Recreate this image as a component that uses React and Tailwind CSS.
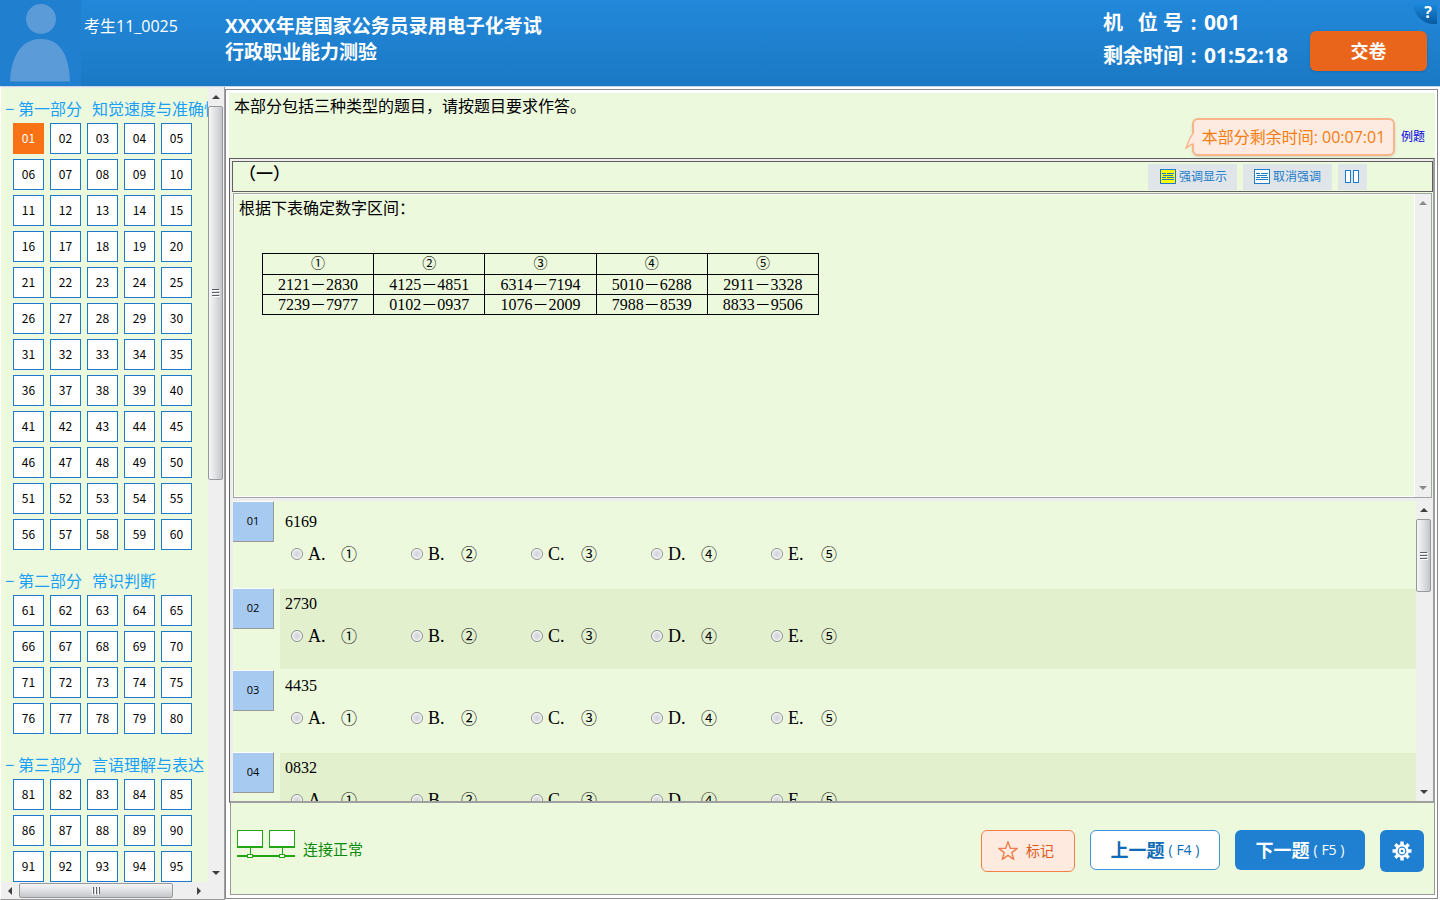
import React, { useState } from "react";

const SECTIONS = [
  { part: "第一部分", name: "知觉速度与准确性", from: 1, to: 60 },
  { part: "第二部分", name: "常识判断", from: 61, to: 80 },
  { part: "第三部分", name: "言语理解与表达", from: 81, to: 95 },
];

const MARKS = ["①", "②", "③", "④", "⑤"];
const LETTERS = ["A", "B", "C", "D", "E"];

const RANGES = [
  ["2121－2830", "4125－4851", "6314－7194", "5010－6288", "2911－3328"],
  ["7239－7977", "0102－0937", "1076－2009", "7988－8539", "8833－9506"],
];

const QUESTIONS = ["6169", "2730", "4435", "0832"];

const pad = (n) => String(n).padStart(2, "0");

function Arrow({ dir, faded }) {
  const d = {
    up: "M1 7 5 3l4 4z",
    down: "M1 3h8L5 7z",
    left: "M7 1v8L3 5z",
    right: "M3 1v8l4-4z",
  }[dir];
  return (
    <svg viewBox="0 0 10 10" className={faded ? "size-2.5 fill-[#8a8a8a]" : "size-2.5 fill-[#404040]"}>
      <path d={d} />
    </svg>
  );
}

function Grip({ vertical }) {
  return (
    <svg viewBox="0 0 8 8" className={vertical ? "size-2" : "size-2 rotate-90"} shapeRendering="crispEdges">
      <path d="M0 .5h7M0 3.5h7M0 6.5h7" stroke="#5c6066" strokeWidth="1" />
      <path d="M1 1.5h7M1 4.5h7M1 7.5h7" stroke="#ffffff" strokeWidth="1" />
    </svg>
  );
}

function VScroll({ thumb, faded }) {
  return (
    <div aria-hidden="true" className="flex w-4 shrink-0 flex-col bg-[#efefef]">
      <div className="flex h-[18px] w-[15px] shrink-0 items-center justify-center">
        <Arrow dir="up" faded={faded} />
      </div>
      {thumb && (
        <div
          className={`${thumb} flex w-[15px] shrink-0 items-center justify-center rounded-[2px] border border-[#96999e] bg-linear-to-r from-[#f6f6f7] via-[#dfe1e4] to-[#c2c5ca]`}
        >
          <Grip vertical />
        </div>
      )}
      <div className="flex-1" />
      <div className="flex h-[18px] w-[15px] shrink-0 items-center justify-center">
        <Arrow dir="down" faded={faded} />
      </div>
    </div>
  );
}

function Header() {
  return (
    <header className="flex h-[87px] shrink-0 border-b border-[#c9d6e2] bg-linear-to-b from-[#2388da] to-[#1a79c4] text-white">
      <svg viewBox="0 0 81 86" className="h-[86px] w-[81px] shrink-0 bg-[#207fcf]">
        <circle cx="41" cy="19" r="15" fill="#5b9bd8" />
        <path d="M10 81.500C11 58 20 39 41 39s28 19 29 42.500z" fill="#5b9bd8" />
      </svg>
      <p className="w-36 shrink-0 pt-[14px] pl-[3px] text-base leading-6">考生11_0025</p>
      <h1 className="flex-1 pt-[13px] text-[19px] leading-[26px] font-bold">
        XXXX年度国家公务员录用电子化考试
        <br />
        行政职业能力测验
      </h1>
      <dl className="grid w-[207px] shrink-0 grid-cols-[80px_21px_1fr] content-start pt-1.5 text-xl leading-[33px] font-bold">
        <dt className="flex justify-between">
          <span>机</span>
          <span>位 号</span>
        </dt>
        <dd className="text-center">:</dd>
        <dd className="text-[21px]">001</dd>
        <dt>剩余时间</dt>
        <dd className="text-center">:</dd>
        <dd className="text-[21px]">01:52:18</dd>
      </dl>
      <div className="relative w-[130px] shrink-0 pt-[31px]">
        <button type="button" className="h-10 w-[117px] rounded-md bg-[#e8651b] text-lg font-bold shadow-sm">
          交卷
        </button>
        <button
          type="button"
          aria-label="帮助"
          className="absolute top-[3px] right-[3px] flex h-[21px] w-6 items-center justify-center rounded-bl-[22px] bg-linear-to-b from-[#1c8be0] to-[#075a9f] pb-1 pl-1.5 text-base font-bold"
        >
          ?
        </button>
      </div>
    </header>
  );
}

function Sidebar({ current, onPick }) {
  return (
    <nav className="flex w-[225px] shrink-0 flex-col border-r border-b border-l border-r-[#a0a0a0] border-b-[#9a9a9a] border-l-white bg-[#efefef] pt-px">
      <div className="flex min-h-0 flex-1">
        <div className="min-w-0 flex-1 overflow-hidden bg-[#ecf9dd] pt-[7px] pl-1">
          {SECTIONS.map((s) => (
            <section key={s.part} className="mb-[17px]">
              <h2 className="h-7 text-base leading-7 whitespace-nowrap text-[#1b9ff8]">
                <button type="button" className="flex">
                  <span className="w-[13px] text-left">−</span>
                  <span className="mr-2.5">{s.part}</span>
                  <span>{s.name}</span>
                </button>
              </h2>
              <div className="grid grid-cols-[repeat(5,31px)] gap-x-1.5 gap-y-[5px] pl-2 font-['Noto_Sans_CJK_SC',sans-serif]">
                {Array.from({ length: s.to - s.from + 1 }, (_, i) => s.from + i).map((n) => (
                  <button
                    key={n}
                    type="button"
                    onClick={() => onPick(n)}
                    className={
                      n === current
                        ? "h-[31px] border border-[#f97316] bg-[#f97316] pb-0.5 text-xs text-white"
                        : "h-[31px] border border-[#1c7ccb] bg-white pb-0.5 text-xs text-black"
                    }
                  >
                    {pad(n)}
                  </button>
                ))}
              </div>
            </section>
          ))}
        </div>
        <VScroll thumb="h-[374px]" />
      </div>
      <div aria-hidden="true" className="flex h-[17px] shrink-0 items-center pr-4">
        <div className="flex w-[18px] justify-center">
          <Arrow dir="left" />
        </div>
        <div className="flex h-[15px] w-[154px] items-center justify-center rounded-[2px] border border-[#96999e] bg-linear-to-b from-[#f6f6f7] via-[#dfe1e4] to-[#c2c5ca]">
          <Grip />
        </div>
        <div className="flex-1" />
        <div className="flex w-[18px] justify-center">
          <Arrow dir="right" />
        </div>
      </div>
    </nav>
  );
}

function LinesIcon({ fill }) {
  return (
    <svg viewBox="0 0 16 15" className="h-[15px] w-4" shapeRendering="crispEdges">
      <rect x=".5" y=".5" width="15" height="14" fill={fill} stroke="#1c7ccb" />
      <path d="M2 4.500h4M7 4.500h7M3 6.500h10M2 8.500h4M7 8.500h7M2 10.500h12" stroke="#1c7ccb" />
    </svg>
  );
}

function Toolbar() {
  const cls = "flex h-[26px] items-center justify-center bg-[#dfe5e9] text-xs text-[#1c7ccb]";
  return (
    <div className="flex h-[31px] shrink-0 items-center border border-[#606060] pr-[65px]">
      <h2 className="flex-1 self-start pl-1.5 text-[17px] leading-6 font-medium">（一）</h2>
      <div className="flex gap-1.5">
        <button type="button" className={`${cls} w-[89px] gap-[3px] pl-0.5`}>
          <LinesIcon fill="#ffff00" />
          强调显示
        </button>
        <button type="button" className={`${cls} w-[89px] gap-[3px]`}>
          <LinesIcon fill="#ffffff" />
          取消强调
        </button>
        <button type="button" aria-label="分栏" className={`${cls} w-[29px]`}>
          <svg viewBox="0 0 15 13" className="h-[13px] w-[15px]" shapeRendering="crispEdges">
            <rect x=".5" y=".5" width="5" height="12" fill="#fff" stroke="#1c7ccb" />
            <rect x="8.500" y=".5" width="5" height="12" fill="#fff" stroke="#1c7ccb" />
          </svg>
        </button>
      </div>
    </div>
  );
}

function Passage() {
  return (
    <div className="mt-px mr-px ml-px flex h-[305px] shrink-0 border border-[#a3a3a8]">
      <div className="min-w-0 flex-1 border border-white pl-1">
        <p className="pt-px text-base leading-6">根据下表确定数字区间：</p>
        <table className="mt-[33px] ml-[23px] w-[557px] table-fixed border-collapse text-center font-['Liberation_Serif','Noto_Sans_CJK_SC',serif] text-base">
          <thead>
            <tr>
              {MARKS.map((m) => (
                <th key={m} scope="col" className="h-[21px] border border-black p-0 text-sm leading-5 font-normal">
                  {m}
                </th>
              ))}
            </tr>
          </thead>
          <tbody>
            {RANGES.map((row) => (
              <tr key={row[0]}>
                {row.map((c) => (
                  <td key={c} className="h-5 border border-black p-0 leading-[19px]">
                    {c}
                  </td>
                ))}
              </tr>
            ))}
          </tbody>
        </table>
      </div>
      <VScroll faded />
    </div>
  );
}

function Question({ index, text }) {
  const first = index === 0;
  return (
    <li className="flex gap-1.5">
      <div className="flex h-[41px] w-[41px] shrink-0 items-center justify-center border-t border-r border-b border-t-white border-r-[#999] border-b-[#999] bg-[#a6caf0] text-[11px]">
        {pad(index + 1)}
      </div>
      <fieldset
        className={`mt-px min-w-0 flex-1 pl-[5px] ${first ? "h-[85px] pt-2" : "h-20 pt-[3px]"} ${index % 2 ? "bg-[#e2f0ce]" : ""}`}
      >
        <legend className="float-left w-full font-['Liberation_Serif',serif] text-base leading-6">{text}</legend>
        <div className="clear-both flex pt-2 pl-1.5">
          {LETTERS.map((l, i) => (
            <label key={l} className="flex w-[120px] items-center leading-6">
              <input
                type="radio"
                name={`q${index}`}
                className="size-3 appearance-none rounded-full border border-[#8e8f8f] bg-radial from-[#cfd3d8] to-[#f4f4f4] inset-ring-1 inset-ring-white checked:bg-[#1c7ccb]"
              />
              <span className="ml-[5px] w-[33px] font-['Liberation_Serif',serif] text-lg leading-6">{l}.</span>
              <span className="text-base leading-6">{MARKS[i]}</span>
            </label>
          ))}
        </div>
      </fieldset>
    </li>
  );
}

function Footer() {
  return (
    <footer className="ml-px flex h-[92px] shrink-0 items-start border-r border-b border-l border-[#999] bg-[#ecf9dd] pt-[27px] pr-[10px] pl-1.5">
      <svg viewBox="0 0 58 28" className="h-7 w-[58px]" shapeRendering="crispEdges">
        <path d="M.5.5h25v16H.5zM32.500.5h25v16h-25z" fill="#fff" stroke="#22a616" />
        <path d="M0 15.500h26v2H0zM32 15.500h26v2H32zM0 25h58v2H0z" fill="#22a616" />
        <path d="M13.500 17v8M45.500 17v8" stroke="#22a616" />
        <path d="M10.500 24.500h5v3h-5zM42.500 24.500h5v3h-5z" fill="#fff" stroke="#22a616" />
      </svg>
      <p className="flex-1 pt-[7px] pl-2 text-[15px] leading-6 text-[#0a8a0a]">连接正常</p>
      <div className="flex items-start gap-[15px]">
        <button
          type="button"
          className="flex h-[42px] w-[94px] items-center justify-center gap-2 rounded-md border border-[#f0814a] bg-[#ffeae0] pr-1 text-sm text-[#dd5a1c]"
        >
          <svg viewBox="0 0 20 20" className="size-5" fill="none" stroke="#ec8050" strokeWidth="1.400" strokeLinejoin="round">
            <path d="m10 .8 2.300 6.400 6.900.2-5.400 4.200 1.900 6.700L10 14.400l-5.700 3.900 1.900-6.700L.8 7.400l6.900-.2z" />
          </svg>
          标记
        </button>
        <button
          type="button"
          className="flex h-10 w-[130px] items-center justify-center gap-1 rounded-md border border-[#3d92dc] bg-white text-[#0f6ab4]"
        >
          <span className="text-lg font-bold">上一题</span>
          <span className="text-sm">( F4 )</span>
        </button>
        <button
          type="button"
          className="flex h-10 w-[130px] items-center justify-center gap-1 rounded-md bg-[#1f7fd0] text-white"
        >
          <span className="text-lg font-bold">下一题</span>
          <span className="text-sm">( F5 )</span>
        </button>
        <button type="button" aria-label="设置" className="flex h-[42px] w-11 items-center justify-center rounded-md bg-[#1f7fd0]">
          <svg viewBox="0 0 20 20" className="size-5">
            <path
              d="M10 .5v19M.5 10h19M3.300 3.300l13.400 13.400M16.700 3.300 3.300 16.700"
              stroke="#fff"
              strokeWidth="3.400"
            />
            <circle cx="10" cy="10" r="6.800" fill="#fff" />
            <circle cx="10" cy="10" r="3.800" fill="none" stroke="#1f7fd0" strokeWidth="1.200" />
            <circle cx="10" cy="10" r="1.300" fill="#1f7fd0" />
          </svg>
        </button>
      </div>
    </footer>
  );
}

export default function App() {
  const [current, setCurrent] = useState(1);
  return (
    <div className="flex h-screen flex-col bg-white font-['Open_Sans','Noto_Sans_CJK_SC',sans-serif] text-black">
      <Header />
      <div className="flex min-h-0 flex-1">
        <Sidebar current={current} onPick={setCurrent} />
        <main className="mt-0.5 mr-0.5 mb-px flex min-w-0 flex-1 flex-col border border-[#88888e] bg-white pt-[3px] pr-0.5 pb-[3px] pl-[3px]">
          <div className="flex h-[65px] shrink-0 justify-between bg-[#ecf9dd] pr-2.5 pl-[5px]">
            <p className="pt-px text-base leading-6">本部分包括三种类型的题目，请按题目要求作答。</p>
            <div className="flex items-center gap-1.5 self-end pb-0.5">
              <p className="relative h-[38px] w-[203px] rounded-md border-2 border-[#f9b48c] bg-[#fdebe1] text-center text-base leading-[34px] whitespace-nowrap text-[#f57c10] shadow-sm">
                本部分剩余时间: 00:07:01
                <svg viewBox="0 0 11 19" className="absolute top-2.5 -left-[9px] h-[19px] w-[11px]">
                  <path d="M9 1C8 5 4 8 3.500 12L1 18c3-1 4-4 8-4" fill="#fdebe1" stroke="#f9b48c" strokeWidth="1.400" />
                </svg>
              </p>
              <a href="#example" className="text-xs text-[#0000e0]">
                例题
              </a>
            </div>
          </div>
          <section className="flex min-h-0 flex-1 flex-col border-t border-r-2 border-b-2 border-l border-t-[#606060] border-r-[#9f9f9f] border-b-[#9f9f9f] border-l-[#606060] bg-[#eeeeee] pt-0.5 pl-0.5">
            <div className="flex shrink-0 flex-col bg-[#ecf9dd]">
              <Toolbar />
              <Passage />
            </div>
            <div className="mt-[3px] mr-px ml-px flex min-h-0 flex-1 bg-[#ecf9dd]">
              <ol className="flex min-w-0 flex-1 flex-col gap-px overflow-hidden">
                {QUESTIONS.map((q, i) => (
                  <Question key={q} index={i} text={q} />
                ))}
              </ol>
              <VScroll thumb="h-[73px]" />
            </div>
          </section>
          <Footer />
        </main>
      </div>
    </div>
  );
}
